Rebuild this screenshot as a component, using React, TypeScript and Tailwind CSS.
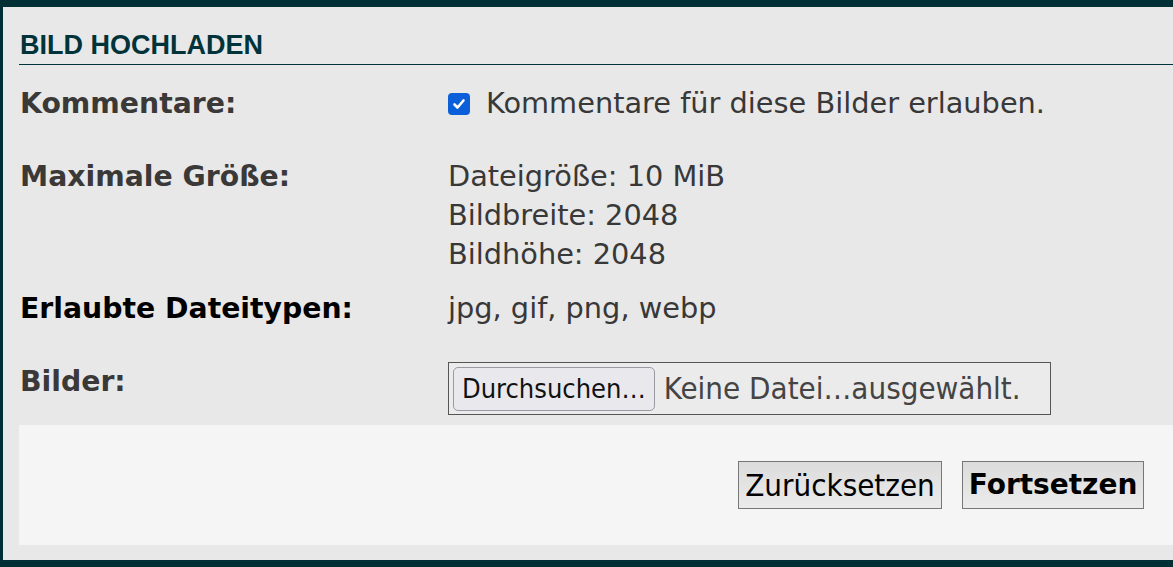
import React from 'react';

const verdana = "font-['DejaVu_Sans',sans-serif]";
const tahoma = "font-['DejaVu_Sans_Condensed','Liberation_Sans',sans-serif]";

const Checkbox: React.FC = () => (
  <span className="inline-flex h-[22px] w-[22px] items-center justify-center rounded-[4px] bg-[#0b5fd8]">
    <svg width="16" height="16" viewBox="0 0 16 16" fill="none">
      <path d="M3.5 8.5l3 3 6-7" stroke="#fff" strokeWidth="2.6" strokeLinecap="round" strokeLinejoin="round" />
    </svg>
  </span>
);

const App: React.FC = () => {
  return (
    <div className="flex h-[567px] w-full flex-col overflow-hidden bg-[#003035] pt-[7px] pl-[3px] pb-[8px]">
      <div className="flex flex-1 flex-col bg-[#e8e8e8] pl-[16px] pb-[15px]">
        <div className="border-b border-[#00333a] pt-[23px] pb-[3px] pl-[1px]">
          <h1 className="font-['Liberation_Sans',Arial,sans-serif] text-[27px] font-bold leading-[31px] text-[#00333a]">
            BILD HOCHLADEN
          </h1>
        </div>

        <div className={`${verdana} text-[28.8px] leading-[39px] text-[#383838]`}>
          <div className="mt-[19px] flex">
            <div className="w-[429px] pl-[1px] text-[28.3px] font-bold text-[#3b3838]">Kommentare:</div>
            <label className="flex items-center gap-[16px]">
              <Checkbox />
              <span>Kommentare für diese Bilder erlauben.</span>
            </label>
          </div>

          <div className="mt-[34px] flex">
            <div className="w-[429px] pl-[1px] text-[28.3px] font-bold text-[#3b3838]">Maximale Größe:</div>
            <div>
              <div>Dateigröße: 10 MiB</div>
              <div>Bildbreite: 2048</div>
              <div>Bildhöhe: 2048</div>
            </div>
          </div>

          <div className="mt-[15px] flex">
            <div className="w-[429px] pl-[1px] text-[28.3px] font-bold text-black">Erlaubte Dateitypen:</div>
            <div>jpg, gif, png, webp</div>
          </div>

          <div className="mt-[34px] flex">
            <div className="w-[429px] pl-[1px] text-[28.3px] font-bold text-[#3b3838]">Bilder:</div>
            <div className={`${tahoma} flex h-[53px] w-[603px] items-center gap-[9px] border border-[#555] bg-[#ebebeb] pl-[4px] leading-none`}>
              <button className="h-[44px] rounded-[5px] border border-[#9a9aa4] bg-[#e9e9ed] px-[8px] text-[27px] text-[#111]">
                Durchsuchen…
              </button>
              <span className="text-[31px] text-[#444]">Keine Datei…ausgewählt.</span>
            </div>
          </div>
        </div>

        <div className="mt-[10px] flex h-[120px] items-center justify-end gap-[20px] bg-[#f5f5f5] pr-[29px]">
          <button className={`${tahoma} h-[48px] w-[204px] border border-[#777] bg-gradient-to-b from-[#dcdcdc] to-[#ebebeb] text-[31px] leading-none text-black`}>
            Zurücksetzen
          </button>
          <button className={`${verdana} h-[48px] w-[182px] border border-[#777] bg-gradient-to-b from-[#dcdcdc] to-[#ebebeb] text-[28px] leading-none font-bold text-black`}>
            Fortsetzen
          </button>
        </div>
      </div>
    </div>
  );
};

export default App;
